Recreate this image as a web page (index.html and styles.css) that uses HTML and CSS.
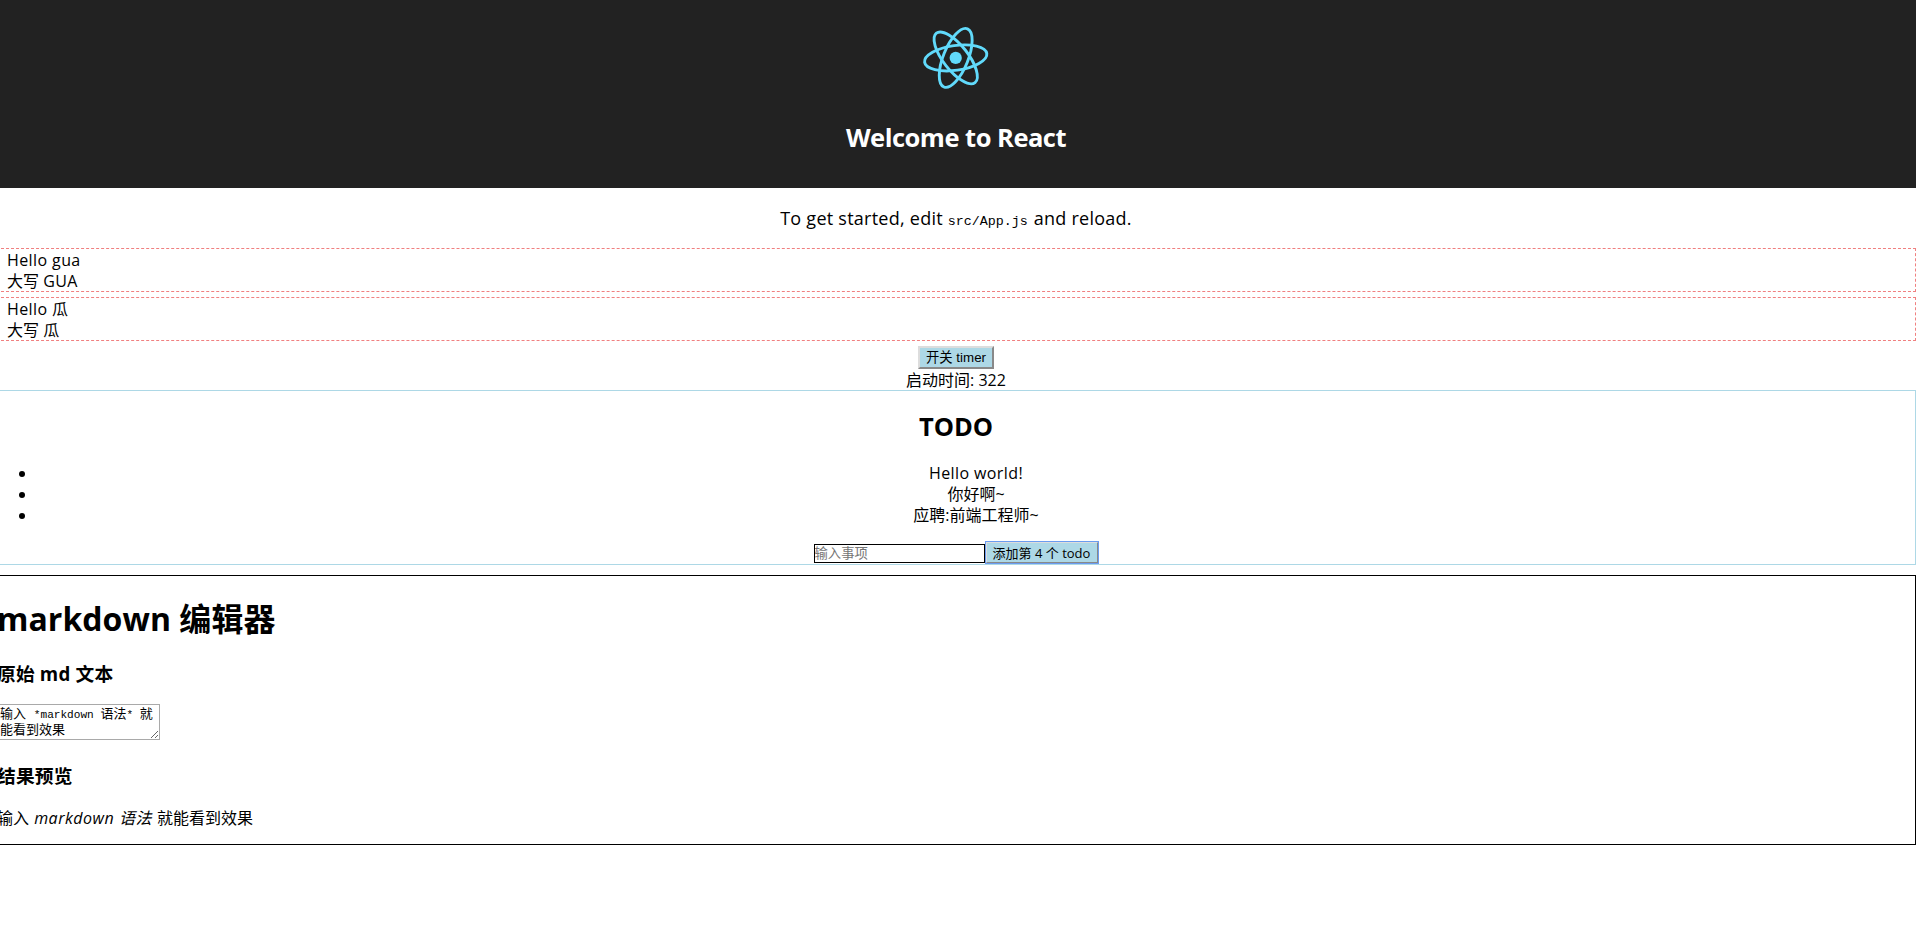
FILE: index.html
```html
<!DOCTYPE html>
<html lang="zh">
<head>
<meta charset="utf-8">
<title>React App</title>
<link rel="stylesheet" href="styles.css">
</head>
<body>
<div class="app">
  <header class="app-header">
    <svg class="app-logo" viewBox="-39.7 -39.9 80 80" aria-hidden="true">
      <g transform="rotate(-8)" fill="none" stroke="#61dafb" stroke-width="2.9">
        <ellipse rx="31.4" ry="12.4"/>
        <ellipse rx="31.4" ry="12.4" transform="rotate(60)"/>
        <ellipse rx="31.4" ry="12.4" transform="rotate(120)"/>
      </g>
      <circle r="6.1" fill="#61dafb"/>
    </svg>
    <h2 class="app-title">Welcome to React</h2>
  </header>
  <p class="app-intro">To get started, edit <code class="app-code">src/App.js</code> and reload.</p>
  <div class="hello"><div><span class="latin">Hello gua</span></div><div>大写 <span class="latin">GUA</span></div></div>
  <div class="hello"><div><span class="latin">Hello </span>瓜</div><div>大写 瓜</div></div>
  <div class="timer">
    <button class="btn timer-btn">开关 timer</button>
    <div class="timer-text">启动时间: 322</div>
  </div>
  <section class="todo">
    <h2 class="todo-title">TODO</h2>
    <ul class="todo-list">
      <li><span class="latin">Hello world!</span></li>
      <li>你好啊~</li>
      <li>应聘:前端工程师~</li>
    </ul>
    <div class="todo-form"><input class="todo-input" placeholder="输入事项"><button class="btn todo-btn">添加第 4 个 todo</button></div>
  </section>
  <section class="editor">
    <h1 class="editor-title">markdown 编辑器</h1>
    <h3 class="editor-sub">原始 md 文本</h3>
    <div class="editor-source" contenteditable="true">输入 <span class="mono">*markdown </span>语法<span class="mono">* </span>就能看到效果</div>
    <h3 class="editor-sub">结果预览</h3>
    <p class="editor-preview">输入 <em>markdown 语法</em> 就能看到效果</p>
  </section>
</div>
</body>
</html>
```
FILE: styles.css
```css
body {
  margin: 0;
  overflow: hidden;
  background: #fff;
  color: #000;
  font: 16px/21px "Open Sans", "Noto Sans CJK SC", sans-serif;
}
.app {
  width: 1920px;
  margin: -2px 0 0 -4px;
  text-align: center;
}
.app-header {
  box-sizing: border-box;
  height: 190px;
  padding-top: 20px;
  background: #222;
  color: #fff;
}
.app-logo { display: block; width: 80px; height: 80px; margin: 0 auto; }
.app-title { margin: 23px 0 0; font-size: 25.5px; line-height: 32px; letter-spacing: -0.5px; }
.app-intro { margin: 18px 0; font-size: 18px; line-height: 24px; letter-spacing: 0.25px; }
.app-code { font: 13.33px "Liberation Mono", monospace; letter-spacing: 0; margin: 0 1px 0 0; }
.latin { letter-spacing: 0.4px; }
.hello {
  box-sizing: border-box;
  height: 44px;
  margin-bottom: 5px;
  padding: 1px 0 0 10px;
  border: 1px dashed #f08080;
  text-align: left;
}
.btn {
  display: block;
  box-sizing: border-box;
  height: 23px;
  padding: 0 4px;
  border: 2px outset #ddd;
  background: #add8e6;
  color: #000;
  font: 13.33px/18px "Liberation Sans", "Noto Sans CJK SC", sans-serif;
  white-space: nowrap;
}
.timer { display: flex; flex-direction: column; align-items: center; height: 44px; }
.timer-btn { width: 76px; padding-top: 1px; }
.timer-text { padding-top: 1px; }
.todo { height: 173px; border: 1px solid #add8e6; }
.todo-title { margin: 19px 0 21px; font-size: 25.5px; line-height: 32px; }
.todo-list { margin: 0; padding-left: 40px; }
.todo-form { display: flex; justify-content: center; margin-top: 15px; }
.todo-input {
  box-sizing: border-box;
  width: 171px;
  height: 19px;
  margin-top: 3px;
  padding: 0;
  border: 1px solid #000;
  font: 13.33px/17px "Liberation Sans", "Noto Sans CJK SC", sans-serif;
}
.todo-btn {
  width: 114px;
  outline: 1px solid #6b9cf0;
  outline-offset: -1px;
  font-size: 13px;
  font-family: "Open Sans", "Noto Sans CJK SC", sans-serif;
}
.editor { height: 268px; margin-top: 10px; border: 1px solid #000; text-align: left; }
.editor-title { margin: 22px 0 0; font-size: 32px; line-height: 42px; letter-spacing: 0.05px; }
.editor-sub { margin: 21px 0 0; font-size: 18.72px; line-height: 25px; letter-spacing: 0.2px; }
.editor-source {
  box-sizing: border-box;
  width: 163px;
  height: 36px;
  margin-top: 18px;
  padding: 2px;
  overflow: hidden;
  resize: both;
  border: 1px solid #a9a9a9;
  font: 13px/15px "Liberation Mono", "Noto Sans CJK SC", monospace;
}
.editor-source + .editor-sub { margin-top: 23px; }
.mono { font-size: 11.1px; }
.editor-preview { margin: 20px 0 0; }
.editor-preview em { margin: 0 1px; letter-spacing: 0.5px; }
```
